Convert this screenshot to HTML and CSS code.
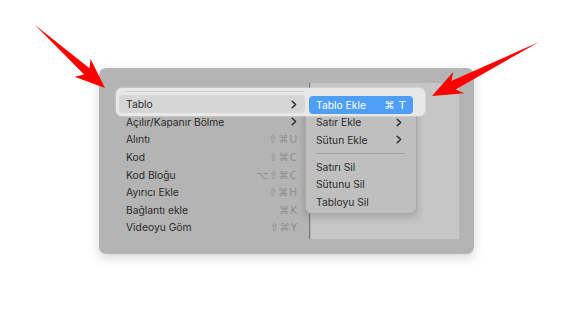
FILE: index.html
```html
<!DOCTYPE html>
<html lang="tr">
<head>
<meta charset="utf-8">
<link rel="stylesheet" href="styles.css">
</head>
<body>
<div class="stage">
  <div class="panel">
    <div class="menu-col">
      <ul class="menu">
        <li class="item active"><span>Tablo</span><svg class="chev" viewBox="0 0 6 9"><path d="M1.2 1.2 L4.6 4.5 L1.2 7.8"/></svg></li>
        <li class="item"><span>Açılır/Kapanır Bölme</span><svg class="chev" viewBox="0 0 6 9"><path d="M1.2 1.2 L4.6 4.5 L1.2 7.8"/></svg></li>
        <li class="item"><span>Alıntı</span><span class="kbd">⇧⌘U</span></li>
        <li class="item"><span>Kod</span><span class="kbd">⇧⌘C</span></li>
        <li class="item"><span>Kod Bloğu</span><span class="kbd">⌥⇧⌘C</span></li>
        <li class="item"><span>Ayırıcı Ekle</span><span class="kbd">⇧⌘H</span></li>
        <li class="item"><span>Bağlantı ekle</span><span class="kbd">⌘K</span></li>
        <li class="item"><span>Videoyu Göm</span><span class="kbd">⇧⌘Y</span></li>
      </ul>
    </div>
    <div class="divider"></div>
    <div class="pane"></div>
  </div>

  <div class="band"></div>

  <div class="submenu">
    <div class="sub-item selected"><span>Tablo Ekle</span><span class="sub-kbd">⌘ T</span></div>
    <div class="sub-item"><span>Satır Ekle</span><svg class="chev" viewBox="0 0 6 9"><path d="M1.2 1.2 L4.6 4.5 L1.2 7.8"/></svg></div>
    <div class="sub-item"><span>Sütun Ekle</span><svg class="chev" viewBox="0 0 6 9"><path d="M1.2 1.2 L4.6 4.5 L1.2 7.8"/></svg></div>
    <div class="sub-sep"></div>
    <div class="sub-item"><span>Satırı Sil</span></div>
    <div class="sub-item"><span>Sütunu Sil</span></div>
    <div class="sub-item"><span>Tabloyu Sil</span></div>
  </div>

  <svg class="arrows" viewBox="0 0 574 323" width="574" height="323">
    <polygon points="35,25 89.5,68.2 90.6,59 105,88 74.6,76.8 84.1,74.6"/>
    <polygon points="539,42 451.2,81 453.4,71.8 432,96 464.2,93.2 455.6,89.4"/>
  </svg>
</div>
</body>
</html>
```

FILE: styles.css
```css
* { box-sizing: border-box; }

html, body {
  margin: 0;
  padding: 0;
  background: #ffffff;
}

body {
  font-family: "Inter", "Noto Sans", "DejaVu Sans", sans-serif;
  font-size: 10.3px;
  color: #2b2b2b;
}

.stage {
  position: relative;
  width: 574px;
  height: 323px;
  overflow: hidden;
  padding-top: 68px;
  padding-left: 99px;
}

.panel {
  width: 375px;
  height: 186px;
  background: #b4b4b4;
  border-radius: 7px;
  box-shadow: 0 4px 12px rgba(0, 0, 0, 0.16);
  display: flex;
  padding: 15px 15px 15px 0;
}

.menu-col {
  width: 210px;
  padding: 12px 4px 0 20px;
}

.menu {
  list-style: none;
  margin: 0;
  padding: 0;
}

.item {
  height: 17.6px;
  display: flex;
  align-items: center;
  justify-content: space-between;
  padding: 0 8px 0 7px;
  border-radius: 4px;
  white-space: nowrap;
}

.item.active {
  position: relative;
  z-index: 2;
  background: #d6d6d6;
  height: 18px;
}

.kbd {
  font-family: "DejaVu Sans", sans-serif;
  font-size: 10.5px;
  color: #8f8f8f;
  letter-spacing: 0.8px;
  margin-right: -1px;
}

.chev {
  width: 6px;
  height: 9px;
  fill: none;
  stroke: #2a2a2a;
  stroke-width: 1.5;
  stroke-linecap: round;
  stroke-linejoin: round;
}

.divider {
  width: 1px;
  background: #767676;
}

.pane {
  flex: 1;
  margin-left: 1px;
  background: #c6c6c6;
}

.band {
  position: absolute;
  left: 116px;
  top: 88px;
  width: 309px;
  height: 28px;
  border-radius: 6px;
  background: #e8e8e8;
  box-shadow: 0 0 2px rgba(255, 255, 255, 0.8);
  z-index: 1;
}

.band::before {
  content: "";
  position: absolute;
  left: 9px;
  top: 3px;
  width: 179px;
  height: 1px;
  background: #d2d2d2;
}

.submenu {
  position: absolute;
  left: 305px;
  top: 91px;
  width: 112px;
  height: 123px;
  padding: 4px 3px;
  background: #bfbfbf;
  border: 1px solid rgba(0, 0, 0, 0.13);
  border-radius: 6px;
  box-shadow: 0 3px 8px rgba(0, 0, 0, 0.18);
}

.sub-item {
  position: relative;
  z-index: 2;
  height: 17.6px;
  display: flex;
  align-items: center;
  justify-content: space-between;
  padding: 0 11px 0 7px;
  border-radius: 4px;
  white-space: nowrap;
}

.sub-item.selected {
  background: #4f9ef6;
  color: #ffffff;
  padding-right: 7px;
}

.sub-kbd {
  font-family: "DejaVu Sans", sans-serif;
  font-size: 10.5px;
  letter-spacing: 0.5px;
}

.sub-sep {
  position: relative;
  z-index: 2;
  height: 1px;
  margin: 4px 8px 4px 7px;
  background: #a2a2a2;
}

.arrows {
  position: absolute;
  left: 0;
  top: 0;
  z-index: 5;
  fill: #ff0000;
}
```
